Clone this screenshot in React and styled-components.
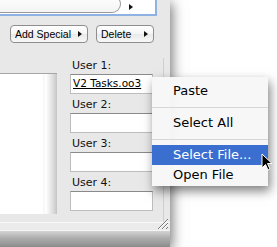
import React from "react";
import styled, { createGlobalStyle } from "styled-components";

const Global = createGlobalStyle`
  html, body { margin: 0; padding: 0; background: #fff; overflow: hidden; }
  body { font-family: "DejaVu Sans", "Liberation Sans", sans-serif; }
`;

const Stage = styled.div`
  position: relative;
  width: 277px;
  height: 247px;
  overflow: hidden;
  background: #fff;
`;

const Window = styled.div`
  width: 170px;
  height: 247px;
  background: #e8e8e8;
  box-shadow: 2px 3px 12px rgba(0, 0, 0, 0.55);
  display: flex;
  flex-direction: column;
  position: relative;
`;

const TopBox = styled.div`
  width: 155px;
  height: 14px;
  background: #fff;
  border-right: 2px solid #8db2e3;
  border-bottom: 2px solid #8db2e3;
  display: flex;
  align-items: flex-end;
`;

const PillField = styled.div`
  width: 121px;
  height: 18px;
  margin-bottom: 1px;
  background: linear-gradient(#fff, #f4f4f4);
  border: 1px solid #9a9a9a;
  border-left: none;
  border-radius: 0 9px 9px 0;
  box-sizing: border-box;
`;

const SmallArrow = styled.span`
  flex: none;
  margin: ${(p) => p.m || "0 0 0 auto"};
  width: 0;
  height: 0;
  border-top: 3px solid transparent;
  border-bottom: 3px solid transparent;
  border-left: 4px solid #111;
`;

const ButtonRow = styled.div`
  display: flex;
  gap: 8px;
  padding: 9px 0 0 10px;
`;

const PopButton = styled.div`
  width: ${(p) => p.w}px;
  height: 18px;
  box-sizing: border-box;
  border: 1px solid #8e8e8e;
  border-radius: 4px;
  background: linear-gradient(#ffffff, #f5f5f5 50%, #e9e9e9 51%, #f8f8f8);
  display: flex;
  align-items: center;
  padding: 0 5px 0 4px;
  font-family: "Liberation Sans", Arial, sans-serif;
  font-size: 10.5px;
  white-space: nowrap;
  color: #000;
`;

const Main = styled.div`
  display: flex;
  margin-top: 15px;
  height: 164px;
`;

const ListPane = styled.div`
  margin-top: 15px;
  height: 140px;
  display: flex;
  border-top: 1px solid #a5a5a5;
`;

const ListBody = styled.div`
  width: 43px;
  background: #fff;
`;

const ScrollTrack = styled.div`
  width: 14px;
  background: linear-gradient(to right, #f4f4f4, #ffffff 20%, #dadada 75%, #c4c4c4);
`;

const FieldColumn = styled.div`
  margin-left: 13px;
  width: 83px;
  display: flex;
  flex-direction: column;
`;

const Group = styled.div`
  height: 39px;
  display: flex;
  flex-direction: column;
`;

const Label = styled.div`
  font-size: 11px;
  line-height: 16px;
  height: 16px;
  padding-left: 2px;
  color: #111;
`;

const Field = styled.div`
  height: 20px;
  box-sizing: border-box;
  background: #fff;
  border: 1px solid #bdbdbd;
  border-top-color: #8a8a8a;
  font-size: 10.5px;
  line-height: 17px;
  padding-left: 2px;
  color: #000;
  text-decoration: ${(p) => (p.link ? "underline" : "none")};
  white-space: nowrap;
  overflow: hidden;
`;

const SideRail = styled.div`
  margin-left: 10px;
  width: 1px;
  background: #cfcfcf;
`;

const Footer = styled.div`
  flex: 1;
  border-top: 1px solid #f8f8f8;
  background: #ebebeb;
`;

const BottomBar = styled.div`
  height: 16px;
  background: linear-gradient(#d4d4d4, #b0b0b0 40%, #8c8c8c);
  border-top: 1px solid #f4f4f4;
`;

const Grip = styled.svg`
  position: absolute;
  left: 157px;
  top: 217px;
`;

const Menu = styled.div`
  position: absolute;
  left: 152px;
  top: 77px;
  width: 116px;
  padding: 4px 0 1px;
  background: rgba(247, 247, 247, 0.97);
  box-shadow: 2px 5px 10px rgba(0, 0, 0, 0.5);
  font-size: 13px;
  color: #000;
`;

const Item = styled.div`
  height: 20px;
  line-height: 20px;
  padding-left: 21px;
  background: ${(p) => (p.active ? "#3a6fd0" : "transparent")};
  color: ${(p) => (p.active ? "#fff" : "#000")};
`;

const Separator = styled.div`
  height: 12px;
  display: flex;
  align-items: center;
  &::after {
    content: "";
    flex: 1;
    height: 1px;
    background: #d6d6d6;
  }
`;

const Cursor = styled.svg`
  position: absolute;
  left: 261px;
  top: 153px;
`;

const users = ["V2 Tasks.oo3", "", "", ""];

export default function App() {
  return (
    <Stage>
      <Global />
      <Window>
        <TopBox>
          <PillField />
          <SmallArrow m="0 0 4px 8px" />
        </TopBox>
        <ButtonRow>
          <PopButton w={78}>
            <span>Add Special</span>
            <SmallArrow />
          </PopButton>
          <PopButton w={58}>
            <span>Delete</span>
            <SmallArrow />
          </PopButton>
        </ButtonRow>
        <Main>
          <ListPane>
            <ListBody />
            <ScrollTrack />
          </ListPane>
          <FieldColumn>
            {users.map((v, i) => (
              <Group key={i}>
                <Label>User {i + 1}:</Label>
                <Field link={!!v}>{v}</Field>
              </Group>
            ))}
          </FieldColumn>
          <SideRail />
        </Main>
        <Footer />
        <BottomBar />
        <Grip width="12" height="13" viewBox="0 0 12 13">
          <path d="M11 2 L1 12 M11 6 L5 12 M11 10 L9 12" stroke="#777" strokeWidth="1" fill="none" />
          <path d="M11 3 L2 12 M11 7 L6 12" stroke="#fff" strokeWidth="1" fill="none" />
        </Grip>
      </Window>
      <Menu>
        <Item>Paste</Item>
        <Separator />
        <Item>Select All</Item>
        <Separator />
        <Item active>Select File...</Item>
        <Item>Open File</Item>
      </Menu>
      <Cursor width="12" height="19" viewBox="0 0 12 19">
        <path d="M1 1 L1 15 L4.5 11.5 L7 17 L9 16 L6.5 10.5 L11 10.5 Z" fill="#000" stroke="#fff" strokeWidth="1" />
      </Cursor>
    </Stage>
  );
}
